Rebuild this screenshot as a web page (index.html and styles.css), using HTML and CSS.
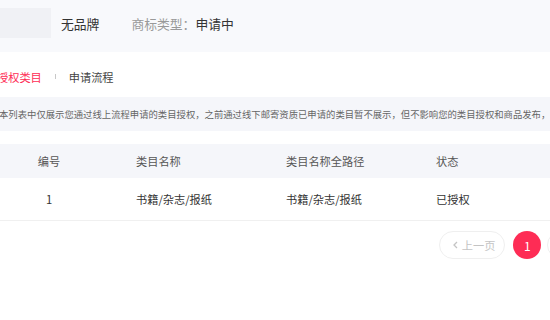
FILE: index.html
```html
<!DOCTYPE html>
<html lang="zh-CN">
<head>
    <meta charset="UTF-8">
    <title>授权类目</title>
    <link rel="stylesheet" href="styles.css">
</head>
<body>
    <div class="page">
        <div class="header">
            <div class="logo"></div>
            <span class="brand">无品牌</span>
            <span class="trademark"><span class="label">商标类型：</span>申请中</span>
        </div>

        <div class="tabs">
            <span class="tab active">授权类目</span>
            <span class="tab-sep"></span>
            <span class="tab">申请流程</span>
        </div>

        <div class="notice">本列表中仅展示您通过线上流程申请的类目授权，之前通过线下邮寄资质已申请的类目暂不展示，但不影响您的类目授权和商品发布，如有疑问请联系客服</div>

        <table class="grid">
            <thead>
                <tr>
                    <th class="col-no">编号</th>
                    <th>类目名称</th>
                    <th>类目名称全路径</th>
                    <th>状态</th>
                </tr>
            </thead>
            <tbody>
                <tr>
                    <td class="col-no">1</td>
                    <td>书籍/杂志/报纸</td>
                    <td>书籍/杂志/报纸</td>
                    <td>已授权</td>
                </tr>
            </tbody>
        </table>

        <div class="pager">
            <button class="pg-btn" disabled>
                <svg width="5" height="8" viewBox="0 0 5 8"><path d="M4 1L1 4l3 3" fill="none" stroke="#c4c4c4" stroke-width="1.3"/></svg>
                上一页
            </button>
            <button class="pg-num">1</button>
            <button class="pg-btn" disabled>
                下一页
                <svg width="5" height="8" viewBox="0 0 5 8"><path d="M1 1l3 3-3 3" fill="none" stroke="#c4c4c4" stroke-width="1.3"/></svg>
            </button>
        </div>
    </div>
</body>
</html>
```

FILE: styles.css
```css
body {
    margin: 0;
    overflow: hidden;
    background: #fff;
    font-family: "Noto Sans CJK SC", "Noto Sans", sans-serif;
    color: #333;
}

.page {
    width: 614px;
}

.header {
    display: flex;
    align-items: center;
    height: 52px;
    padding-bottom: 6px;
    box-sizing: border-box;
    background-color: #f8f9fc;
}

.logo {
    width: 51px;
    height: 30px;
    background-color: #f0f1f5;
}

.brand {
    margin-left: 10px;
    font-size: 12.8px;
    color: #333;
}

.trademark {
    margin-left: 32px;
    font-size: 12.8px;
    color: #333;
}

.trademark .label {
    color: #999;
}

.tabs {
    display: flex;
    align-items: center;
    height: 45px;
    padding-top: 4px;
    box-sizing: border-box;
    margin-left: -3px;
}

.tab {
    font-size: 11.2px;
    color: #444;
}

.tab.active {
    color: #fe2c55;
}

.tab-sep {
    width: 1px;
    height: 5px;
    margin: 0 13px;
    background-color: #c8c8c8;
}

.notice {
    height: 34px;
    line-height: 34px;
    background-color: #f5f6fa;
    font-size: 9.35px;
    color: #666;
    white-space: nowrap;
    overflow: hidden;
    text-indent: -1px;
}

.grid {
    margin-top: 13px;
    width: 100%;
    border-collapse: collapse;
    table-layout: fixed;
    font-size: 11.2px;
}

.grid th,
.grid td {
    width: 112px;
    padding: 0 0 0 38px;
    text-align: left;
    font-weight: normal;
}

.grid th {
    height: 34px;
    background-color: #f5f6fa;
    color: #555;
}

.grid td {
    height: 42px;
    border-bottom: 1px solid #f0f0f0;
    color: #333;
}

.grid .col-no {
    width: 98px;
    padding: 0;
    text-align: center;
}

.grid th:last-child,
.grid td:last-child {
    width: auto;
}

.pager {
    display: flex;
    justify-content: flex-end;
    margin-top: 10px;
}

.pg-btn {
    display: flex;
    align-items: center;
    gap: 4px;
    height: 28px;
    padding: 0 9px 0 13px;
    border: 1px solid #efefef;
    border-radius: 14px;
    background: #fff;
    font-family: inherit;
    font-size: 11.2px;
    color: #c4c4c4;
}

.pg-btn:last-child {
    margin-left: 6px;
    padding: 0 13px 0 9px;
}

.pg-num {
    width: 28px;
    height: 28px;
    margin-left: 8px;
    padding: 0;
    border: none;
    border-radius: 50%;
    background-color: #fe2c55;
    color: #fff;
    font-family: inherit;
    font-size: 12px;
    cursor: pointer;
}
```
